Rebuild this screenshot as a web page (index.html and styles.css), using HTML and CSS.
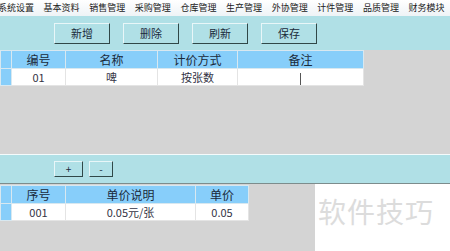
FILE: index.html
```html
<!DOCTYPE html>
<html lang="zh-CN">
<head>
  <meta charset="UTF-8">
  <title>计价方式</title>
  <link rel="stylesheet" href="styles.css">
</head>
<body>
  <div class="menubar">
    <span>系统设置</span>
    <span>基本资料</span>
    <span>销售管理</span>
    <span>采购管理</span>
    <span>仓库管理</span>
    <span>生产管理</span>
    <span>外协管理</span>
    <span>计件管理</span>
    <span>品质管理</span>
    <span>财务模块</span>
  </div>

  <div class="toolbar">
    <button class="btn">新增</button>
    <button class="btn">删除</button>
    <button class="btn">刷新</button>
    <button class="btn">保存</button>
  </div>

  <div class="upper">
    <table class="grid">
      <tr class="head">
        <td class="ind"></td>
        <td class="c-code">编号</td>
        <td class="c-name">名称</td>
        <td class="c-way">计价方式</td>
        <td class="c-note">备注</td>
      </tr>
      <tr>
        <td class="ind"></td>
        <td>01</td>
        <td>啤</td>
        <td>按张数</td>
        <td><span class="caret"></span></td>
      </tr>
    </table>
  </div>

  <div class="panel">
    <button class="btn small">+</button>
    <button class="btn small minus">-</button>
  </div>

  <div class="lower">
    <table class="grid">
      <tr class="head">
        <td class="ind"></td>
        <td class="c-seq">序号</td>
        <td class="c-desc">单价说明</td>
        <td class="c-price">单价</td>
      </tr>
      <tr>
        <td class="ind"></td>
        <td>001</td>
        <td>0.05元/张</td>
        <td>0.05</td>
      </tr>
    </table>
    <div class="mark">软件技巧</div>
  </div>
</body>
</html>
```

FILE: styles.css
```css
body {
  margin: 0;
  width: 450px;
  height: 251px;
  overflow: hidden;
  background: #d4d4d4;
  font-family: "Noto Sans CJK SC", "DejaVu Sans", sans-serif;
  color: #1a2a3a;
}
.menubar {
  height: 16px;
  display: flex;
  gap: 9.6px;
  margin-left: -2px;
  background: linear-gradient(#ffffff, #eef3f6);
  font-size: 9px;
  line-height: 15px;
  white-space: nowrap;
  color: #222;
}
.toolbar {
  height: 34px;
  display: flex;
  align-items: center;
  gap: 9px;
  padding-left: 54px;
  background: #b0e0e6;
}
.btn {
  width: 56px;
  height: 21px;
  margin-right: 4px;
  padding: 0;
  background: #b0e0e6;
  border: 1px solid;
  border-color: #e8f6f8 #304848 #304848 #e8f6f8;
  font-family: inherit;
  font-size: 11px;
  color: #1a2a3a;
}
.upper {
  height: 104px;
}
.grid {
  border-collapse: collapse;
  font-size: 12px;
  background: #fff;
  text-align: center;
}
.grid td {
  height: 16px;
  padding: 0;
  border: 1px solid #e4e4e4;
  line-height: 15px;
  font-size: 11px;
  color: #334;
}
.grid .head td {
  height: 17px;
  background: #87cefa;
  border-color: #d8e8f0;
  font-size: 12px;
  color: #1a2a3a;
}
.grid td.ind {
  width: 10px;
  background: #87cefa;
  border-color: #d8e8f0;
}
.c-code { width: 53px; }
.c-name { width: 91px; }
.c-way { width: 79px; }
.c-note { width: 125px; }
.c-seq { width: 53px; }
.c-desc { width: 129px; }
.c-price { width: 52px; }
.caret {
  display: inline-block;
  width: 1px;
  height: 12px;
  background: #555;
  vertical-align: middle;
}
.panel {
  height: 28px;
  display: flex;
  align-items: center;
  gap: 2px;
  padding-left: 54px;
  background: #b0e0e6;
  border-top: 1px solid #f4fbfc;
  border-bottom: 1px solid #7c8c8c;
}
.btn.small {
  width: 29px;
  height: 16px;
  font-size: 10px;
  line-height: 12px;
}
.btn.minus {
  width: 24px;
}
.lower {
  display: flex;
  justify-content: space-between;
  height: 67px;
}
.lower .grid {
  margin-top: 1px;
  align-self: flex-start;
}
.mark {
  width: 135px;
  background: #fff;
  color: #dcdcdc;
  font-size: 28px;
  line-height: 30px;
  padding-top: 12px;
  padding-left: 3px;
  box-sizing: border-box;
  letter-spacing: 1px;
}
```
